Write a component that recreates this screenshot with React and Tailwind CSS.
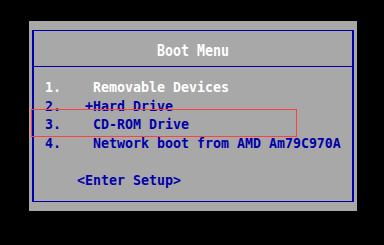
const ITEMS = [
  { num: "1.", gap: "    ", label: "Removable Devices", active: true },
  { num: "2.", gap: "   ", label: "+Hard Drive" },
  { num: "3.", gap: "    ", label: "CD-ROM Drive" },
  { num: "4.", gap: "    ", label: "Network boot from AMD Am79C970A" },
];

export default function App() {
  return (
    <div
      className="relative w-[384px] h-[245px] bg-black pt-[21px] pl-[29px] overflow-hidden"
      style={{ fontFamily: '"DejaVu Sans Mono", "Liberation Mono", monospace' }}
    >
      <div className="w-[328px] h-[190px] bg-[#a8a8a8] pt-[9px] pl-[3px]">
        <div className="w-[322px] h-[172px] border-x-2 border-y border-[#0000a8] flex flex-col">
          <div className="h-[36px] pt-[12px] border-b border-[#0000a8] text-center text-white font-bold text-[13.29px] leading-[18.67px] whitespace-pre">
            <div className="origin-[50%_75%] scale-y-[1.2]">Boot Menu</div>
          </div>
          <div className="pt-[12px] pl-[11px] font-bold text-[13.29px] leading-[18.67px] whitespace-pre">
            {ITEMS.map((item) => (
              <div
                key={item.num}
                className={
                  "origin-[50%_75%] scale-y-[1.12] " +
                  (item.active ? "text-white" : "text-[#0000a8]")
                }
              >
                {item.num}
                {item.gap}
                {item.label}
              </div>
            ))}
            <div>&nbsp;</div>
            <div className="origin-[50%_75%] scale-y-[1.12] text-[#0000a8]">
              {"    <Enter Setup>"}
            </div>
          </div>
        </div>
      </div>

      {/* red highlight drawn over the third entry */}
      <div className="absolute left-[31px] top-[109px] w-[266px] h-[28px] border border-[#ff4040]" />
    </div>
  );
}
